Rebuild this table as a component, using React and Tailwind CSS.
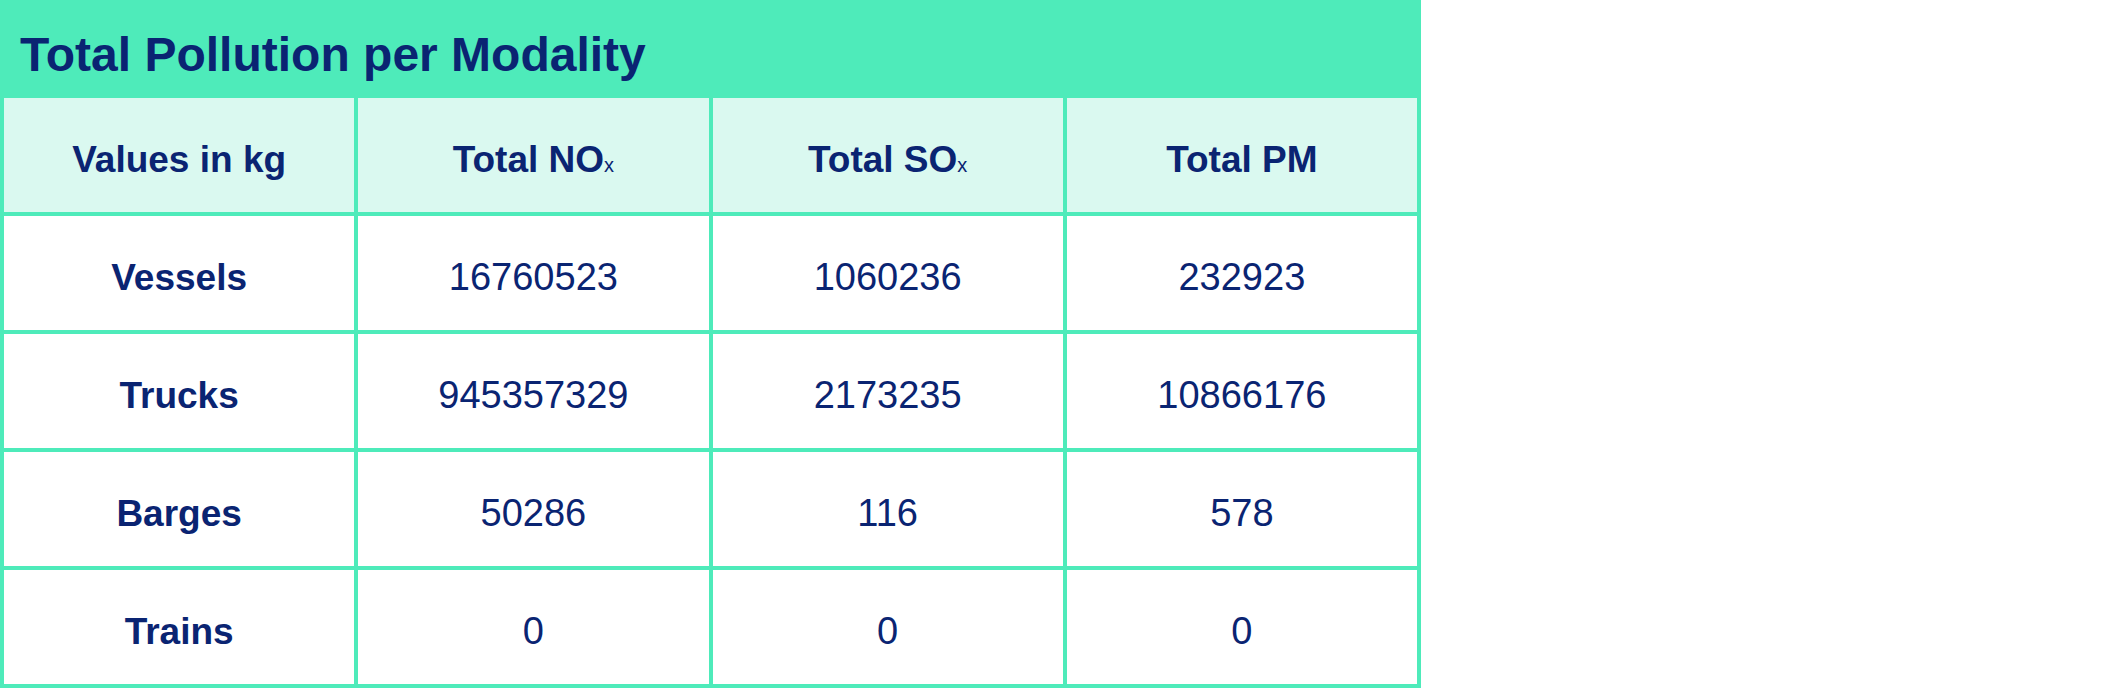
import React from "react";

const rows = [
  ["Vessels", "16760523", "1060236", "232923"],
  ["Trucks", "945357329", "2173235", "10866176"],
  ["Barges", "50286", "116", "578"],
  ["Trains", "0", "0", "0"],
];

function HeaderCell({ children }) {
  return (
    <div className="h-[114px] bg-[#daf9f0] flex items-center justify-center pt-[8px]">
      <span className="text-[37px] leading-none font-bold text-[#0a2472]">{children}</span>
    </div>
  );
}

export default function App() {
  return (
    <div className="bg-white w-[2102px] h-[697px]" style={{ fontFamily: '"Liberation Sans", Arial, sans-serif' }}>
      <div className="w-[1421px] bg-[#4eebba]">
        <div className="h-[98px] pl-[20px] pt-[31px]">
          <h1 className="text-[48px] leading-none font-bold text-[#0a2472]">Total Pollution per Modality</h1>
        </div>
        <div className="grid grid-cols-4 gap-[4px] px-[4px] pb-[4px]">
          <HeaderCell>Values in kg</HeaderCell>
          <HeaderCell>
            Total NO<span className="text-[20px] font-normal">x</span>
          </HeaderCell>
          <HeaderCell>
            Total SO<span className="text-[20px] font-normal">x</span>
          </HeaderCell>
          <HeaderCell>Total PM</HeaderCell>
          {rows.map((r) => (
            <React.Fragment key={r[0]}>
              <div className="h-[114px] bg-white flex items-center justify-center pt-[8px]">
                <span className="text-[37px] leading-none font-bold text-[#0a2472]">{r[0]}</span>
              </div>
              {r.slice(1).map((v, i) => (
                <div key={i} className="h-[114px] bg-white flex items-center justify-center pt-[8px]">
                  <span className="text-[38px] leading-none text-[#0a2472]">{v}</span>
                </div>
              ))}
            </React.Fragment>
          ))}
        </div>
      </div>
    </div>
  );
}
